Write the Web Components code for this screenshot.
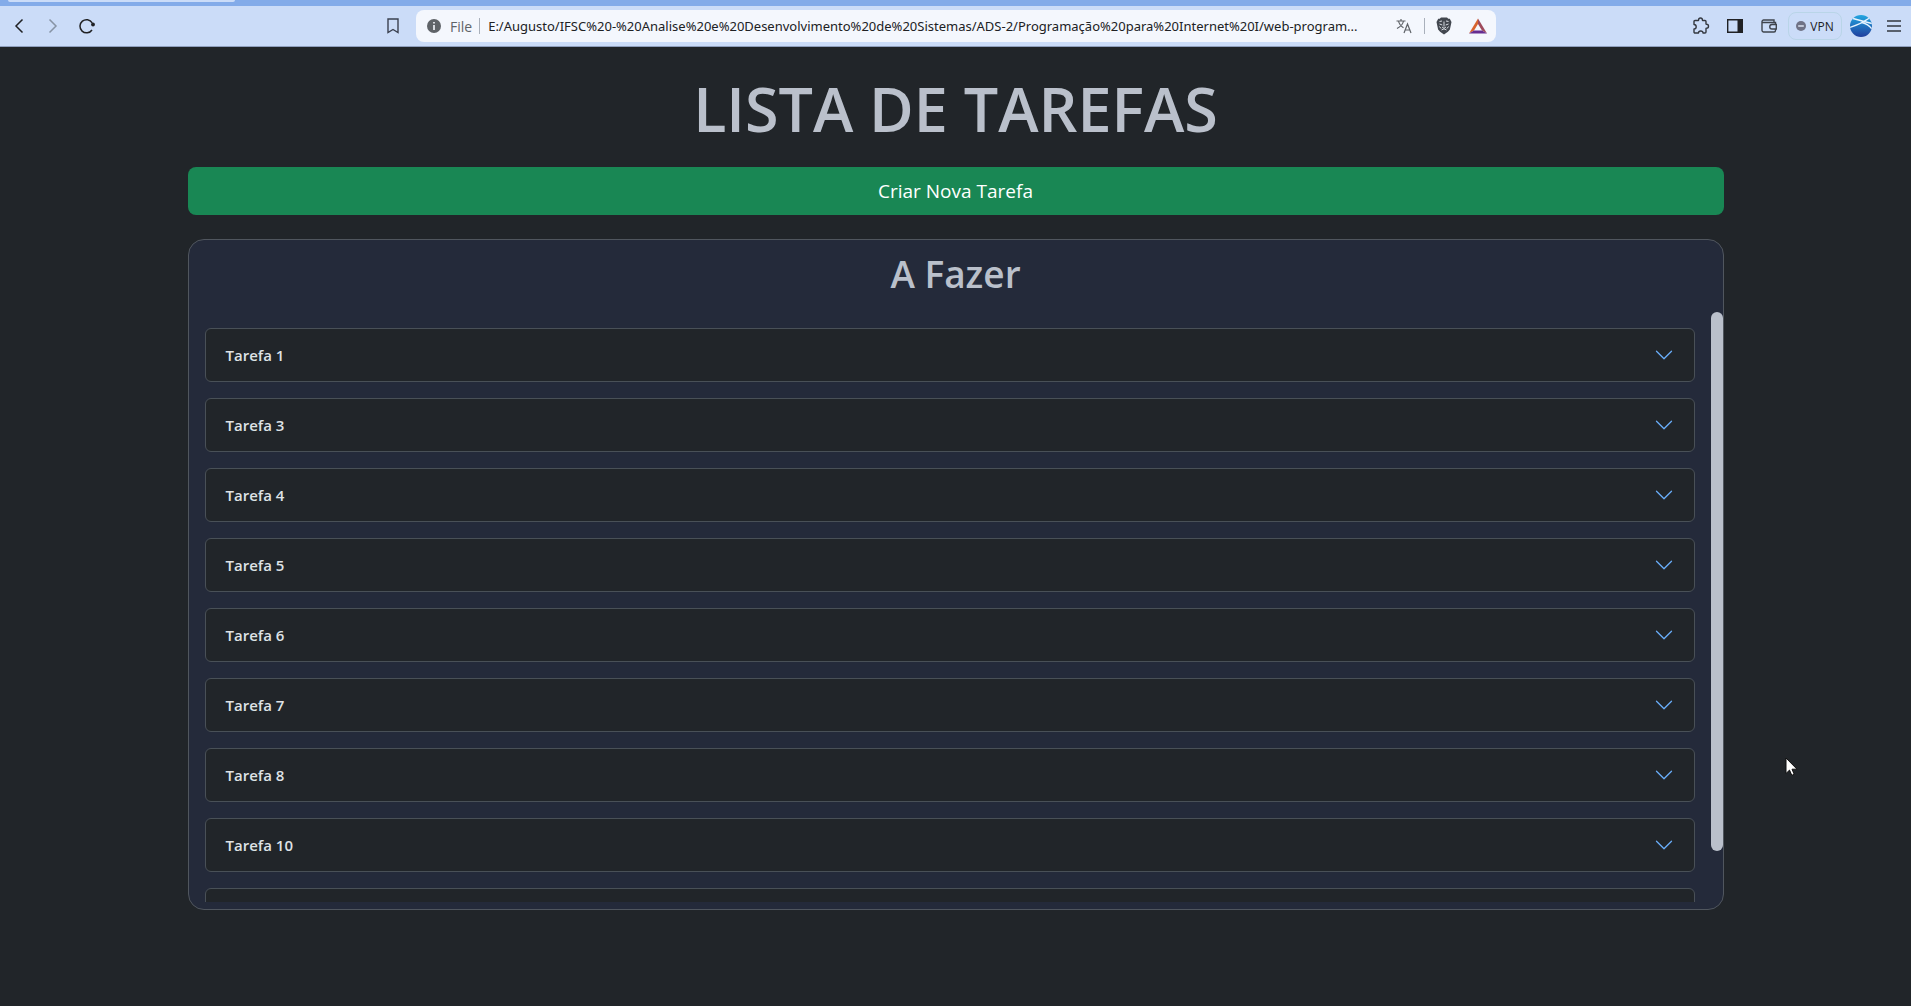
<!DOCTYPE html>
<html lang="pt-BR">
<head>
<meta charset="utf-8">
<title>Lista de Tarefas</title>
<style>
  html, body { margin: 0; height: 100%; }
  body {
    display: flex; flex-direction: column;
    background: #212529; color: #dee2e6;
    font-family: "Segoe UI", "Open Sans", "Noto Sans", sans-serif;
    overflow: hidden;
  }
  todo-page { flex: 1; }
</style>
</head>
<body>
<browser-bar></browser-bar>
<todo-page>
  <todo-card heading="A Fazer">
    <todo-item>Tarefa 1</todo-item>
    <todo-item>Tarefa 3</todo-item>
    <todo-item>Tarefa 4</todo-item>
    <todo-item>Tarefa 5</todo-item>
    <todo-item>Tarefa 6</todo-item>
    <todo-item>Tarefa 7</todo-item>
    <todo-item>Tarefa 8</todo-item>
    <todo-item>Tarefa 10</todo-item>
    <todo-item></todo-item>
  </todo-card>
</todo-page>
<mouse-pointer></mouse-pointer>

<script>
class BaseElement extends HTMLElement {
  render(html) { this.attachShadow({ mode: "open" }).innerHTML = html; }
}

customElements.define("browser-bar", class extends BaseElement {
  connectedCallback() {
    this.render(`
<style>
  :host { display: block; font-size: 14px; color: #202124; }
  .tabs { height: 6px; background: #83abe9; padding-left: 8px; box-sizing: border-box; }
  .tab { width: 227px; height: 2px; background: #cbdcf8; border-radius: 0 0 4px 4px; }
  .bar {
    display: grid; grid-template-columns: 376fr 1120fr 415fr; align-items: center;
    height: 41px; box-sizing: border-box; background: #cbdcf8; border-bottom: 1px solid #8f9fbd;
  }
  .nav, .tools, .mid, .address, .vpn { display: flex; align-items: center; }
  button { border: 0; padding: 0; background: none; font: inherit; color: inherit; display: flex; align-items: center; justify-content: center; flex: none; }
  .nav button { width: 34px; height: 34px; }
  .nav { padding-left: 2px; }
  .mid > button { width: 34px; margin-right: 6px; }
  .address { flex: 1; min-width: 0; height: 32px; background: #f4f7fd; border-radius: 8px; padding: 0 8px 0 10px; box-sizing: border-box; }
  label { color: #5f6368; margin: 0 7px 0 8px; }
  .sep { width: 1px; height: 16px; background: #a9b0bb; flex: none; }
  input { flex: 1; min-width: 0; border: 0; outline: 0; background: none; padding: 0; margin-left: 8px; font-family: "Segoe UI", "Noto Sans", sans-serif; font-size: 13px; color: #202124; text-overflow: ellipsis; }
  .acts { display: flex; align-items: center; }
  .acts button { width: 20px; }
  .acts .sep { margin: 0 9px 0 10px; }
  .acts button + button { margin-left: 14px; }
  .tools { justify-content: flex-end; }
  .tools > button { width: 34px; height: 28px; }
  .tools > .profile { width: 32px; }
  .tools > .vpn { width: 54px; gap: 4px; border: 1px solid #b9d5e8; border-radius: 8px; font-size: 12px; box-sizing: border-box; margin: 0 3px 0 2px; }
</style>
<div class="tabs"><div class="tab"></div></div>
<div class="bar">
  <div class="nav">
    <button aria-label="Voltar"><svg width="16" height="16" viewBox="0 0 16 16" fill="none" stroke="#202124" stroke-width="1.5"><path d="M11.5 1.500 5 8l6.500 6.500"/></svg></button>
    <button aria-label="Avançar"><svg width="16" height="16" viewBox="0 0 16 16" fill="none" stroke="#8794a5" stroke-width="1.5"><path d="M4.500 1.500 11 8l-6.500 6.500"/></svg></button>
    <button aria-label="Recarregar"><svg width="18" height="16" viewBox="0 0 18 16" fill="none" stroke="#202124" stroke-width="1.5"><path d="M14.200 4.800A6.600 6.600 0 1 0 14 12"/><circle cx="15" cy="6.500" r="1.900" fill="#202124" stroke="none"/></svg></button>
  </div>
  <div class="mid">
    <button aria-label="Favoritos"><svg width="12" height="16" viewBox="0 0 12 16" fill="none" stroke="#3b4150" stroke-width="1.400"><path d="M1 1h10v13.500L6 11.500 1 14.500z"/></svg></button>
    <div class="address">
      <svg width="16" height="16" viewBox="0 0 16 16"><circle cx="8" cy="8" r="7" fill="#5f6368"/><path d="M7.200 4h1.600v1.600H7.200zM7.200 7h1.600v5H7.200z" fill="#f4f7fd"/></svg>
      <label for="url">File</label><span class="sep"></span>
      <input id="url" type="text" value="E:/Augusto/IFSC%20-%20Analise%20e%20Desenvolvimento%20de%20Sistemas/ADS-2/Programação%20para%20Internet%20I/web-program...">
      <div class="acts">
        <button aria-label="Traduzir"><svg width="16" height="16" viewBox="0 0 16 16" fill="none" stroke="#5f6368" stroke-width="1.200"><path d="M.5 3h9M5 1v2M2.500 3c.5 2.500 3 5.500 5 6.800M7.500 3C7 6 4 9 1 10.500M8 15l3.500-9L15 15M9.200 12h4.600"/></svg></button>
        <span class="sep"></span>
        <button aria-label="Brave Shields"><svg width="16" height="18" viewBox="0 0 16 18"><path d="M5 .5h6l1.300 1.300h1.500L15.500 5l-1.600 7.500-2 2.300L8 17.500l-3.900-2.700-2-2.300L.5 5l1.700-3.200h1.500z" fill="#42474f"/><path d="M3.500 4.500 6 4M12.500 4.500 10 4M3.500 7l2.800 1M12.500 7 9.700 8M8 4.500v5M6 10l2 1.300L10 10M5.500 13 8 11.800l2.500 1.200M3.500 9.500l1.500 2M12.500 9.500l-1.500 2" fill="none" stroke="#e8ecf3" stroke-width=".9"/></svg></button>
        <button aria-label="Brave Rewards"><svg width="18" height="16" viewBox="0 0 18 16"><path d="M9 .5 0 15.500l5-3L9 6z" fill="#d8642f"/><path d="M9 .5 18 15.500l-5-3L9 6z" fill="#9e4a5c"/><path d="M0 15.500h18l-5-3H5z" fill="#662d91"/></svg></button>
      </div>
    </div>
  </div>
  <div class="tools">
    <button aria-label="Extensões"><svg width="18" height="18" viewBox="0 0 18 18" fill="none" stroke="#33373f" stroke-width="1.400" stroke-linejoin="round"><path d="M3 3.500h3.200c.3 0 .4-.3.4-.6a1.900 1.900 0 0 1 3.800 0c0 .3.100.6.400.6H13a1 1 0 0 1 1 1v2.300c0 .4.300.5.600.5a1.900 1.900 0 0 1 0 3.800c-.3 0-.6.100-.6.500V15a1 1 0 0 1-1 1h-2c0-1.200-.9-2-2.200-2s-2.300.8-2.300 2H3a1 1 0 0 1-1-1v-3c1.300 0 2.200-.9 2.200-2.200S3.300 7.500 2 7.500v-3a1 1 0 0 1 1-1z"/></svg></button>
    <button aria-label="Painel lateral"><svg width="16" height="14" viewBox="0 0 16 14"><path d="M.7.7h14.600v12.600H.7z" fill="none" stroke="#202124" stroke-width="1.400"/><path d="M10.500 1H15v12h-4.500z" fill="#202124"/></svg></button>
    <button aria-label="Carteira"><svg width="16" height="14" viewBox="0 0 16 14" fill="none" stroke="#3f444d" stroke-width="1.400"><path d="M14.500 5V3.500H1M13 3.500V1H2.500A1.700 1.700 0 0 0 1 2.500v9A1.700 1.700 0 0 0 2.500 13H13a1.500 1.500 0 0 0 1.500-1.500V10M15.300 5.500H11a2.200 2.200 0 0 0 0 4.500h4.300z"/></svg></button>
    <button class="vpn"><svg width="10" height="10" viewBox="0 0 10 10"><circle cx="5" cy="5" r="5" fill="#6f7285"/><path d="M2.200 4.300h5.600v1.400H2.200z" fill="#e6edfa"/></svg>VPN</button>
    <button class="profile" aria-label="Perfil"><svg width="22" height="22" viewBox="0 0 22 22"><defs><linearGradient id="g" x1="0" y1="0" x2="0" y2="1"><stop offset="0" stop-color="#22a6e0"/><stop offset="1" stop-color="#203f9e"/></linearGradient><clipPath id="c"><circle cx="11" cy="11" r="11"/></clipPath></defs><g clip-path="url(#c)"><path d="M0 0h22v22H0z" fill="url(#g)"/><path d="M0 12.500Q10 9.500 19.500 3M3 3.500Q12 6 22 8.500M12 7.500Q18 9 22 14" fill="none" stroke="#e8f4ff" stroke-width="1.300"/></g></svg></button>
    <button aria-label="Menu"><svg width="14" height="12" viewBox="0 0 14 12" stroke="#33373f" stroke-width="1.400"><path d="M0 1h14M0 6h14M0 11h14"/></svg></button>
  </div>
</div>`);
  }
});

customElements.define("todo-page", class extends BaseElement {
  connectedCallback() {
    this.render(`
<style>
  :host { display: block; }
  main { max-width: 1536px; margin: 0 auto; padding-top: 24px; display: flex; flex-direction: column; }
  h1 { margin: 0 0 20px; font-size: 61px; line-height: 76px; font-weight: 600; color: #bac0cb; text-align: center; }
  button { height: 48px; border: 0; border-radius: 8px; background: #198754; color: #fff; font: inherit; font-size: 19px; margin-bottom: 24px; }
</style>
<main>
  <h1>LISTA DE TAREFAS</h1>
  <button type="button">Criar Nova Tarefa</button>
  <slot></slot>
</main>`);
  }
});

customElements.define("todo-card", class extends BaseElement {
  connectedCallback() {
    this.render(`
<style>
  :host { display: block; background: #242a3a; border: 1px solid #50565e; border-radius: 16px; padding-bottom: 7px; }
  h2 { margin: 0; padding: 10px 0 14px; font-size: 37px; line-height: 48px; font-weight: 600; color: #bac0cb; text-align: center; }
  .body { display: flex; max-height: calc(100vh - 416px); }
  .list { flex: 1; min-width: 0; overflow-y: auto; scrollbar-width: none; padding: 16px 16px 0; box-sizing: border-box; }
  .track { width: 12px; flex: none; }
  .thumb { background: #bac0cb; border-radius: 6px; }
</style>
<h2></h2>
<div class="body"><div class="list"><slot></slot></div><div class="track"><div class="thumb"></div></div></div>`);
    this.shadowRoot.querySelector("h2").textContent = this.getAttribute("heading");
    this.list = this.shadowRoot.querySelector(".list");
    this.thumb = this.shadowRoot.querySelector(".thumb");
    this.list.addEventListener("scroll", () => this.updateThumb());
    new ResizeObserver(() => this.updateThumb()).observe(this.list);
  }
  updateThumb() {
    const { clientHeight, scrollHeight, scrollTop } = this.list;
    const ratio = clientHeight / scrollHeight;
    this.thumb.style.height = Math.round(clientHeight * ratio) + "px";
    this.thumb.style.transform = `translateY(${Math.round(scrollTop * ratio)}px)`;
  }
});

customElements.define("todo-item", class extends BaseElement {
  connectedCallback() {
    this.render(`
<style>
  :host { display: block; padding-bottom: 16px; }
  button {
    width: 100%; height: 54px; display: flex; align-items: center; justify-content: space-between;
    padding: 0 20px; background: #212529; border: 1px solid #495057; border-radius: 6px;
    font: inherit; font-size: 15px; font-weight: 600; color: #dee2e6;
  }
</style>
<button type="button" aria-expanded="false"><span><slot></slot></span>
<svg width="20" height="20" viewBox="0 0 16 16" fill="#6aaefa"><path fill-rule="evenodd" d="M1.646 4.646a.5.5 0 0 1 .708 0L8 10.293l5.646-5.647a.5.5 0 0 1 .708.708l-6 6a.5.5 0 0 1-.708 0l-6-6a.5.5 0 0 1 0-.708z"/></svg></button>`);
  }
});

customElements.define("mouse-pointer", class extends BaseElement {
  connectedCallback() {
    this.render(`
<style>:host { position: absolute; left: 1785px; top: 757px; pointer-events: none; }</style>
<svg width="13" height="20" viewBox="0 0 13 20"><path d="M1 1v15.500l3.500-3.400 2.300 5.200 2.400-1-2.200-5.100H12z" fill="#fff" stroke="#111" stroke-width="1"/></svg>`);
  }
});
</script>
</body>
</html>
